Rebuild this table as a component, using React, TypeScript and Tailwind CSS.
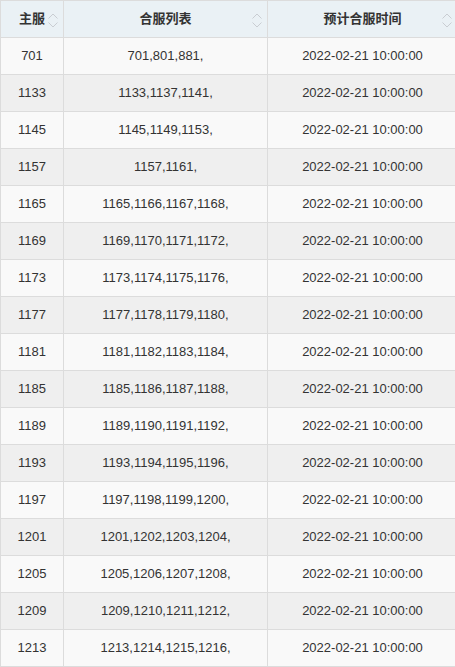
const rows: [string, string][] = [
  ['701', '701,801,881,'],
  ['1133', '1133,1137,1141,'],
  ['1145', '1145,1149,1153,'],
  ['1157', '1157,1161,'],
  ['1165', '1165,1166,1167,1168,'],
  ['1169', '1169,1170,1171,1172,'],
  ['1173', '1173,1174,1175,1176,'],
  ['1177', '1177,1178,1179,1180,'],
  ['1181', '1181,1182,1183,1184,'],
  ['1185', '1185,1186,1187,1188,'],
  ['1189', '1189,1190,1191,1192,'],
  ['1193', '1193,1194,1195,1196,'],
  ['1197', '1197,1198,1199,1200,'],
  ['1201', '1201,1202,1203,1204,'],
  ['1205', '1205,1206,1207,1208,'],
  ['1209', '1209,1210,1211,1212,'],
  ['1213', '1213,1214,1215,1216,'],
];

function SortIcon() {
  return (
    <svg
      className="absolute right-[5px] top-[12px]"
      width="10"
      height="15"
      viewBox="0 0 10 15"
      fill="none"
      stroke="#c9cdd2"
      strokeWidth="1"
    >
      <path d="M0.5 5.5 L5 1 L9.5 5.5" />
      <path d="M0.5 9.5 L5 14 L9.5 9.5" />
    </svg>
  );
}

const cell = 'flex items-center justify-center h-[37px] border-r border-b border-[#dcdcdc]';

export default function App() {
  return (
    <div
      className="w-[455px] h-[667px] overflow-hidden bg-white text-[#333] text-[13px]"
      style={{ fontFamily: '"Liberation Sans", "Noto Sans CJK SC", sans-serif' }}
    >
      <div className="w-[458px] border-l border-t border-[#dcdcdc]">
        <div className="grid grid-cols-[63px_204px_190px] bg-[#eaf1f5] font-bold">
          {['主服', '合服列表', '预计合服时间'].map((h) => (
            <div key={h} className={`${cell} relative`}>
              {h}
              <SortIcon />
            </div>
          ))}
        </div>
        {rows.map(([main, list], i) => (
          <div
            key={main}
            className={`grid grid-cols-[63px_204px_190px] ${i % 2 === 0 ? 'bg-[#f9f9f9]' : 'bg-[#efefef]'}`}
          >
            <div className={cell}>{main}</div>
            <div className={cell}>{list}</div>
            <div className={cell}>2022-02-21 10:00:00</div>
          </div>
        ))}
      </div>
    </div>
  );
}
